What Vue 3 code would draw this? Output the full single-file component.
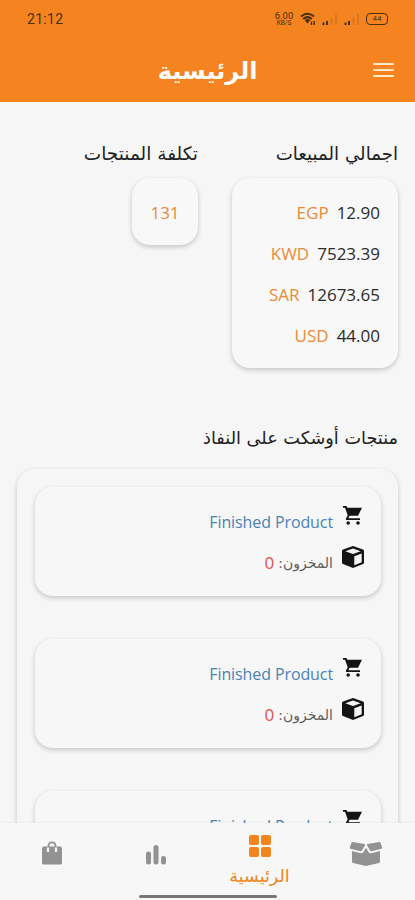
<template>
  <div class="screen" dir="rtl">
    <header class="header">
      <div class="status-bar" dir="ltr">
        <span class="time">21:12</span>
        <div class="status-icons">
          <div class="speed"><span>6.00</span><span>KB/S</span></div>
          <svg class="wifi" width="16" height="14" viewBox="0 0 16 14">
            <path d="M1 4.5Q7.5-1 14 4.5M3.2 7Q7.5 3.3 11.8 7" fill="none" stroke="currentColor" stroke-width="2" />
            <path d="M4.8 8.2Q7.5 6 10.2 8.2L7.5 11.4Z" fill="currentColor" />
            <path d="M11.5 13V9.5M14.2 9V13" stroke="currentColor" stroke-width="1.4" />
          </svg>
          <svg v-for="n in 2" :key="n" class="signal" width="16" height="13" viewBox="0 0 16 13">
            <path d="M1.5 12V9.5M5 12V8" stroke="currentColor" stroke-width="2" />
            <path d="M9.5 12V4.5M14 12V1" stroke="#a8672c" stroke-width="1.5" opacity=".5" />
          </svg>
          <div class="battery">44</div>
        </div>
      </div>
      <div class="app-bar">
        <h1>الرئيسية</h1>
        <button class="menu" @click="menuOpen = !menuOpen"><i></i><i></i><i></i></button>
      </div>
    </header>

    <main class="content">
      <section class="summary">
        <div class="total">
          <h2 class="title-sales">اجمالي المبيعات</h2>
          <div class="card sales-card">
            <div v-for="item in sales" :key="item.currency" class="sale">
              <span class="amount">{{ item.amount }}</span>
              <span class="currency">{{ item.currency }}</span>
            </div>
          </div>
        </div>
        <div class="cost">
          <h2 class="title-cost">تكلفة المنتجات</h2>
          <div class="card cost-card">131</div>
        </div>
      </section>

      <section class="low-stock">
        <h2 class="title-stock">منتجات أوشكت على النفاذ</h2>
        <div class="card product-list">
          <div v-for="product in products" :key="product.id" class="card product">
            <div class="product-row">
              <svg class="cart-icon" width="19" height="19" viewBox="0 0 19 19">
                <path d="M0 0H3.4L4.3 1.8H19L15 9.8H6.6L5.4 12.2H17V14H3.4Q2.5 13.500 3 12.500L4.700 9.300L2 1.800H0Z" />
                <circle cx="5.2" cy="17" r="1.8" />
                <circle cx="15" cy="17" r="1.8" />
              </svg>
              <span class="product-name">{{ product.name }}</span>
            </div>
            <div class="product-row">
              <svg class="box-icon" width="22" height="22" viewBox="0 0 22 22">
                <path d="M11 0L21 3.500Q22 4 22 5V16.500Q22 17.500 21 18L11 22L1 18Q0 17.500 0 16.500V5Q0 4 1 3.500Z" />
                <path d="M11 2.500L18.700 5.200L11 8.100L3.300 5.200ZM12.300 10.200L19.700 7.400V16.200L12.300 19.200Z" fill="#f6f6f6" />
              </svg>
              <span class="stock">المخزون:</span>
              <span class="count">{{ product.stock }}</span>
            </div>
          </div>
        </div>
      </section>
    </main>

    <nav class="bottom-nav">
      <a class="nav-item" @click="active = 'products'">
        <svg width="34" height="25" viewBox="0 0 34 25">
          <path d="M3.500 1L15.500 3Q16.500 3.300 16 4.300L12.800 9.800Q12.300 10.500 11.500 10.300L1.500 7.800Q.5 7.500.8 6.500L2.500 1.700Q2.800 1 3.500 1ZM30.500 1L18.500 3Q17.500 3.300 18 4.300L21.200 9.800Q21.700 10.500 22.500 10.300L32.500 7.800Q33.500 7.500 33.200 6.500L31.500 1.700Q31.200 1 30.500 1Z" />
          <path d="M3 10L12 12.300Q13.500 12.600 14.300 11.300L17 6.800L19.700 11.300Q20.500 12.600 22 12.300L31 10V20.500Q31 21.700 30 22L18 24.800Q17 25 16 24.800L4 22Q3 21.700 3 20.500Z" />
        </svg>
      </a>
      <a class="nav-item" :class="{ active: active === 'home' }" @click="active = 'home'">
        <svg width="22" height="22" viewBox="0 0 22 22">
          <rect width="10" height="10" rx="2" />
          <rect x="12" width="10" height="10" rx="2" />
          <rect y="12" width="10" height="10" rx="2" />
          <rect x="12" y="12" width="10" height="10" rx="2" />
        </svg>
        <span class="nav-label">الرئيسية</span>
      </a>
      <a class="nav-item" @click="active = 'reports'">
        <svg width="20" height="20" viewBox="0 0 20 20">
          <rect y="6.5" width="5" height="13" rx="2.5" />
          <rect x="7.5" width="5" height="19.5" rx="2.5" />
          <rect x="15" y="11" width="5" height="8.5" rx="2.5" />
        </svg>
      </a>
      <a class="nav-item" @click="active = 'orders'">
        <svg width="20" height="24" viewBox="0 0 20 24">
          <path d="M2 5.500H18Q20 5.500 20 7.500V22Q20 23.500 18.500 23.500H1.500Q0 23.500 0 22V7.500Q0 5.500 2 5.500Z" />
          <path d="M6.500 7V5Q6.500 1.300 10 1.300T13.500 5V7" fill="none" stroke="currentColor" stroke-width="1.8" />
          <path d="M6 7.500V10M14 7.500V10" stroke="#f3f3f3" stroke-width="2.400" stroke-linecap="round" />
        </svg>
      </a>
      <div class="home-indicator"></div>
    </nav>
  </div>
</template>

<script setup>
import { ref } from "vue";

const active = ref("home");
const menuOpen = ref(false);

const sales = ref([
  { currency: "EGP", amount: "12.90" },
  { currency: "KWD", amount: "7523.39" },
  { currency: "SAR", amount: "12673.65" },
  { currency: "USD", amount: "44.00" },
]);

const products = ref([
  { id: 1, name: "Finished Product", stock: 0 },
  { id: 2, name: "Finished Product", stock: 0 },
  { id: 3, name: "Finished Product", stock: 0 },
]);
</script>

<style>
body {
  margin: 0;
  background: #f6f6f6;
}
</style>

<style scoped>
.screen {
  display: flex;
  flex-direction: column;
  width: 415px;
  height: 900px;
  overflow: hidden;
  background: #f6f6f6;
  color: #2b2b2b;
  font-family: "Open Sans", "DejaVu Sans", sans-serif;
}

.header {
  flex: none;
  height: 102px;
  background: #f58420;
}

.status-bar {
  display: flex;
  justify-content: space-between;
  align-items: center;
  height: 38px;
  padding: 0 27px;
  color: #49300f;
}

.time {
  font: 14px Roboto, sans-serif;
  letter-spacing: 0.3px;
}

.status-icons {
  display: flex;
  align-items: center;
  gap: 6px;
}

.speed {
  display: flex;
  flex-direction: column;
  align-items: center;
  width: 20px;
  font: 9.5px/8px Roboto, sans-serif;
}

.speed span:last-child {
  font-size: 6.5px;
  line-height: 6px;
}

.battery {
  box-sizing: border-box;
  width: 22px;
  height: 12px;
  border: 1.5px solid #49300f;
  border-radius: 4px;
  font: 8px/9px Roboto, sans-serif;
  text-align: center;
}

.app-bar {
  display: grid;
  grid-template-columns: 21px 1fr 21px;
  align-items: center;
  height: 64px;
  padding: 0 21px;
}

.app-bar h1 {
  grid-column: 2;
  grid-row: 1;
  margin: 0;
  padding-top: 2px;
  color: #fff;
  font: bold 24px/40px "DejaVu Sans", sans-serif;
  text-align: center;
}

.menu {
  display: flex;
  grid-column: 1;
  grid-row: 1;
  flex-direction: column;
  gap: 4px;
  padding: 0;
  border: 0;
  background: none;
}

.menu i {
  width: 21px;
  height: 2px;
  border-radius: 1px;
  background: #ffe9c9;
}

.content {
  flex: 1;
  min-height: 0;
  overflow: hidden;
  padding: 38px 17px 0;
}

h2 {
  margin: 0;
  color: #222;
  font: 18.2px/28px "DejaVu Sans", sans-serif;
  white-space: nowrap;
}

.title-cost {
  font-size: 18.5px;
}

.title-stock {
  font-size: 17.7px;
}

.card {
  box-sizing: border-box;
  border-radius: 18px;
  background: #f8f8f8;
  box-shadow: 0 2px 5px rgba(0, 0, 0, 0.2);
}

.summary {
  display: grid;
  grid-template-columns: 166px 1fr;
  gap: 34px;
  height: 284px;
}

.sales-card {
  display: flex;
  flex-direction: column;
  height: 190px;
  margin-top: 10px;
  padding: 14px 18px 0;
}

.sale {
  display: flex;
  flex: none;
  gap: 8px;
  height: 41px;
  font-size: 17px;
  line-height: 41px;
}

.currency,
.cost-card {
  color: #ec8b37;
}

.cost-card {
  width: 66px;
  height: 67px;
  margin-top: 10px;
  font-size: 17px;
  line-height: 69px;
  text-align: center;
}

.product-list {
  display: flex;
  flex-direction: column;
  gap: 43px;
  height: 500px;
  margin-top: 17px;
  padding: 18px 17px 18px 18px;
  background: #f6f6f6;
}

.product {
  flex: none;
  height: 109px;
  padding: 14px 17px;
  background: #f7f7f7;
}

.product-row {
  display: flex;
  height: 41px;
  line-height: 42px;
}

.product-row svg {
  flex: none;
  fill: #141414;
}

.cart-icon {
  margin: 5px 2px 0 10px;
}

.box-icon {
  margin: 4px 0 0 9px;
}

.product-name {
  color: #4a83b8;
  font-size: 16px;
  letter-spacing: -0.1px;
}

.stock {
  color: #606060;
  font: 14px/42px "DejaVu Sans", sans-serif;
}

.count {
  margin-right: 4px;
  color: #e44e4a;
  font-size: 17px;
}

.bottom-nav {
  position: relative;
  display: grid;
  flex: none;
  grid-template-columns: 98px 115px 93px 1fr;
  height: 77px;
  background: #f7f7f7;
  box-shadow: 0 -1px 2px rgba(0, 0, 0, 0.04);
}

.nav-item {
  display: flex;
  flex-direction: column;
  align-items: center;
  padding-top: 18px;
  color: #929292;
}

.nav-item svg {
  flex: none;
  fill: currentColor;
}

.nav-item:nth-child(3) {
  padding-top: 22px;
}

.nav-item:nth-child(4) {
  padding-right: 5px;
}

.nav-item.active {
  padding-top: 12px;
  color: #f18520;
}

.nav-label {
  margin-top: 5px;
  font: 17.5px/28px "DejaVu Sans", sans-serif;
}

.home-indicator {
  position: absolute;
  bottom: 2px;
  left: 139px;
  width: 138px;
  height: 3px;
  border-radius: 2px;
  background: #777;
}
</style>
